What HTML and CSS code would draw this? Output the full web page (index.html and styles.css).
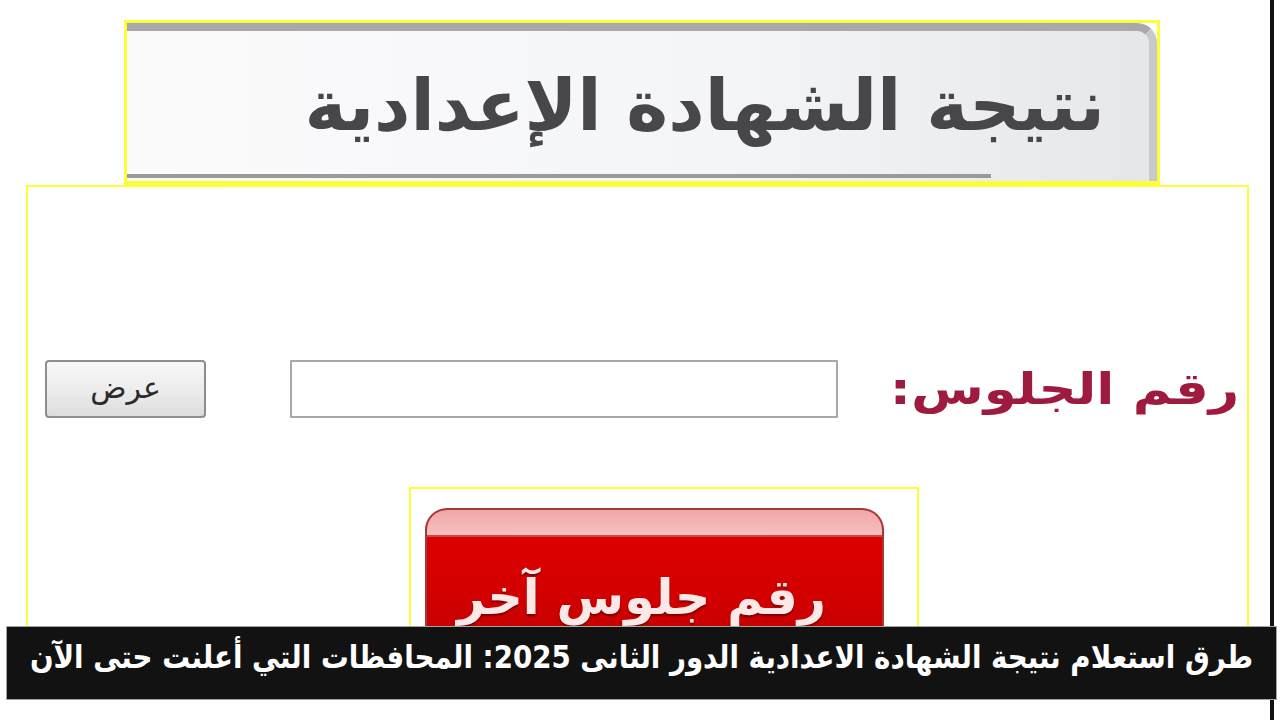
FILE: index.html
```html
<!DOCTYPE html>
<html lang="ar">
<head>
<meta charset="utf-8">
<title>نتيجة الشهادة الإعدادية</title>
<link rel="stylesheet" href="styles.css">
</head>
<body>
<div class="page">
  <header class="header">
    <div class="header-panel">
      <h1 class="title">نتيجة الشهادة الإعدادية</h1>
      <div class="header-rule"></div>
    </div>
  </header>

  <main class="main">
    <form class="form-row" dir="rtl">
      <label class="seat-label" for="seat"><span class="seat-label-text">رقم الجلوس:</span></label>
      <input class="seat-input" id="seat" type="text">
      <button class="show-btn" type="button">عرض</button>
    </form>

    <div class="again-box">
      <div class="again-btn">
        <div class="again-shine"></div>
        <div class="again-text">رقم جلوس آخر</div>
      </div>
    </div>
  </main>

  <div class="edge-line"></div>

  <div class="caption" dir="rtl"><span class="caption-text">طرق استعلام نتيجة الشهادة الاعدادية الدور الثانى 2025: المحافظات التي أعلنت حتى الآن</span></div>
</div>
</body>
</html>
```

FILE: styles.css
```css
* { box-sizing: border-box; }

html, body {
  margin: 0;
  padding: 0;
  background: #ffffff;
}

.page {
  position: relative;
  width: 1280px;
  height: 720px;
  overflow: hidden;
  padding-top: 20px;
  font-family: "DejaVu Sans", sans-serif;
}

/* ---- title banner ---- */
.header {
  margin-left: 124px;
  width: 1036px;
  height: 165px;
  border: 3px solid #fdfd3a;
  border-bottom-width: 4px;
  background: #ffffff;
}

.header-panel {
  position: relative;
  height: 100%;
  border-top: 8px solid #a9a9ad;
  border-right: 8px solid #c9c9cc;
  border-top-right-radius: 20px;
  background: linear-gradient(90deg, #fbfbfc 0%, #f4f5f7 60%, #e6e7ea 100%);
  display: flex;
  flex-direction: column;
}

.title {
  margin: 30px 44px 0 0;
  text-align: right;
  font-size: 71px;
  line-height: 90px;
  font-weight: bold;
  color: #47474a;
  white-space: nowrap;
}

.header-rule {
  margin-top: auto;
  margin-bottom: 3px;
  width: 864px;
  height: 4px;
  background: #9a9a9c;
}

/* ---- form area ---- */
.main {
  margin-left: 26px;
  width: 1223px;
  height: 450px;
  border: 2px solid #fdfd3a;
  border-bottom: none;
  padding-top: 173px;
}

.form-row {
  display: flex;
  align-items: center;
  height: 58px;
  margin: 0;
  padding-right: 8px;
}

.seat-label {
  display: flex;
  align-items: center;
  justify-content: flex-start;
  width: 345px;
  height: 58px;
  white-space: nowrap;
}

.seat-label-text {
  display: inline-block;
  font-size: 44px;
  line-height: 52px;
  font-weight: bold;
  color: #9e1a3e;
  transform: scaleX(1.2);
  transform-origin: right center;
}

.seat-input {
  margin-right: 56px;
  width: 548px;
  height: 58px;
  border: 2px solid #a8a8a8;
  border-radius: 1px;
  background: #ffffff;
  outline: none;
}

.show-btn {
  margin-right: 84px;
  width: 161px;
  height: 58px;
  border: 2px solid #8e8e8e;
  border-radius: 4px;
  background: linear-gradient(180deg, #f7f7f7 0%, #ececec 55%, #dcdcdc 100%);
  font-family: "DejaVu Sans", sans-serif;
  font-size: 30px;
  color: #2a2a2a;
  padding: 0 0 4px;
}

.again-box {
  margin: 69px 0 0 381px;
  width: 510px;
  height: 160px;
  border: 2px solid #fdfd3a;
  padding: 19px 0 0 14px;
}

.again-btn {
  width: 459px;
  height: 137px;
  border: 2px solid #a23a3a;
  border-bottom: none;
  border-radius: 22px 22px 0 0;
  background: linear-gradient(180deg, #e00000 0%, #d40000 60%, #c20000 100%);
  overflow: hidden;
}

.again-shine {
  height: 27px;
  background: linear-gradient(180deg, #f0a7a7 0%, #f6c0c0 100%);
  border-bottom: 2px solid #c84848;
}

.again-text {
  margin-top: 28px;
  padding-right: 26px;
  text-align: center;
  font-size: 49px;
  font-weight: bold;
  line-height: 66px;
  color: #fde8e8;
  text-shadow: 0 2px 2px #7a0000;
  white-space: nowrap;
}

/* ---- frame line on the right ---- */
.edge-line {
  position: absolute;
  top: 0;
  left: 1270px;
  width: 4px;
  height: 720px;
  background: #111111;
}

/* ---- caption bar over the bottom ---- */
.caption {
  position: absolute;
  left: 6px;
  top: 626px;
  width: 1271px;
  height: 74px;
  background: #121212;
  border: 1px solid #a4a4a4;
  padding-right: 23px;
  text-align: right;
  white-space: nowrap;
  overflow: hidden;
}

.caption-text {
  display: inline-block;
  color: #ffffff;
  font-size: 32px;
  font-weight: bold;
  line-height: 60px;
  transform: scaleX(0.865);
  transform-origin: right center;
}
```
